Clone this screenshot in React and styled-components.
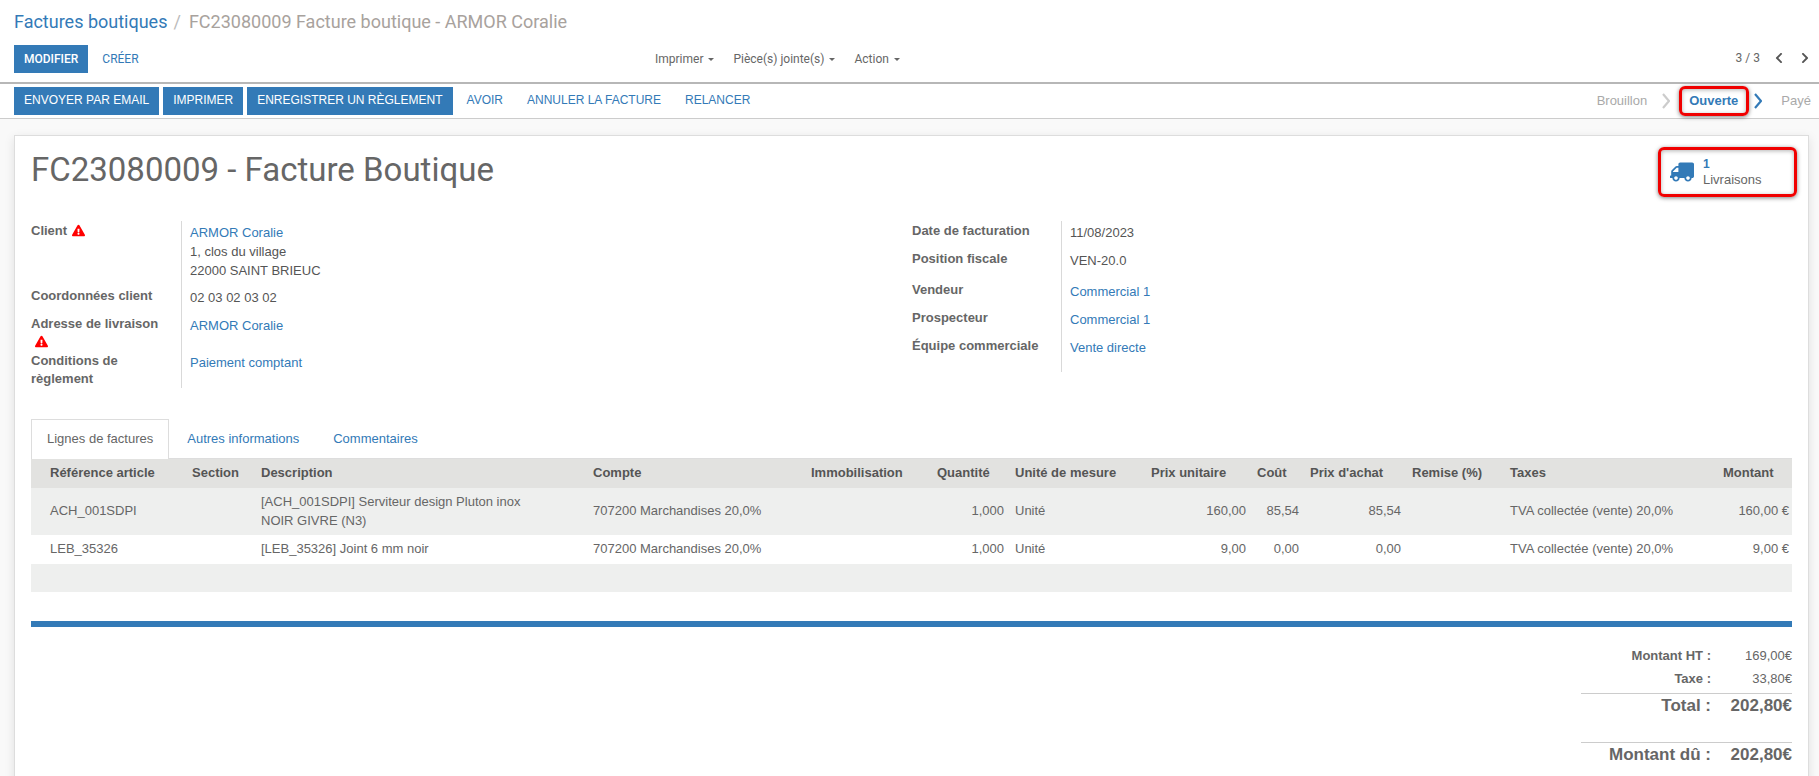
import React from 'react'
import styled, { createGlobalStyle } from 'styled-components'
import { FaTruck, FaExclamationTriangle, FaChevronLeft, FaChevronRight } from 'react-icons/fa'

const GlobalStyle = createGlobalStyle`
html, body {
    margin: 0;
    height: 776px;
    overflow: hidden;
    background: #f9f9f9;
    font-family: "Liberation Sans", Arial, sans-serif;
    font-size: 13px;
    color: #666666;
}
* { box-sizing: border-box; }
`;

const blue = '#337ab7';
const roboto = 'Roboto, "Liberation Sans", sans-serif';

const ControlPanel = styled.div`
height: 84px;
background: #ffffff;
border-bottom: 2px solid #b7b7b7;
font-family: ${roboto};
`;
const Breadcrumb = styled.div`
height: 45px;
padding: 11px 0 0 14px;
font-size: 18px;
line-height: 22px;
color: #a8a29d;
a { color: ${blue}; }
i { font-style: normal; color: #bbbbbb; margin: 0 8px 0 6px; }
`;
const ControlRow = styled.div`
display: grid;
grid-template-columns: 641px 1fr auto;
align-items: center;
height: 28px;
padding: 0 9px 0 14px;
`;
const Group = styled.div`
display: flex;
align-items: center;
gap: ${p => p.$gap || 4}px;
`;
const Button = styled.span`
display: inline-flex;
align-items: center;
height: 28px;
padding: 0 10px 1px;
font-size: 12px;
font-weight: ${p => p.$weight || 400};
white-space: nowrap;
background: ${blue};
color: #ffffff;
`;
const LinkButton = styled(Button)`
background: transparent;
color: ${blue};
font-weight: 400;
`;
const Dropdown = styled.span`
font-size: 12px;
color: #666666;
white-space: nowrap;
&::after {
    content: '';
    display: inline-block;
    margin-left: 5px;
    vertical-align: 2px;
    border-top: 3px solid #666666;
    border-left: 3px solid transparent;
    border-right: 3px solid transparent;
}
`;
const Pager = styled.div`
display: flex;
align-items: center;
font-size: 12px;
margin-top: -3px;
span { margin-right: 14px; }
svg { width: 10px; height: 12px; color: #555555; margin-right: 16px; }
svg:last-child { margin-right: 0; }
`;

const StatusBar = styled.div`
display: flex;
justify-content: space-between;
align-items: center;
height: 35px;
padding: 0 8px 1px 14px;
background: #ffffff;
border-bottom: 1px solid #cccccc;
`;
const Steps = styled.div`
display: flex;
align-items: center;
`;
const Step = styled.span`
position: relative;
display: inline-block;
font-size: 13px;
line-height: 15px;
font-weight: ${p => (p.$active ? 700 : 400)};
color: ${p => (p.$active ? blue : '#a9a9a9')};
margin-top: -1px;
`;
const StepArrow = styled.svg`
width: 8px;
height: 16px;
margin: ${p => p.$margin};
fill: none;
stroke: ${p => p.$color};
stroke-width: 2.2;
`;
const Highlight = styled.span`
position: absolute;
top: ${p => p.$top}px;
bottom: ${p => p.$bottom}px;
left: ${p => p.$left}px;
right: ${p => p.$right}px;
border: 3px solid #f00000;
border-radius: 6px;
box-shadow: 0 1px 4px rgba(0, 0, 0, 0.5), inset 0 1px 4px rgba(0, 0, 0, 0.3);
pointer-events: none;
`;

const Sheet = styled.div`
margin: 16px 10px 0 14px;
padding: 0 16px;
height: 700px;
background: #ffffff;
border: 1px solid #dddddd;
box-shadow: 0 3px 10px rgba(0, 0, 0, 0.1);
`;
const TitleRow = styled.div`
display: flex;
justify-content: space-between;
align-items: flex-start;
height: 85px;
`;
const Title = styled.h1`
margin: 14px 0 0;
font-family: ${roboto};
font-size: 33px;
line-height: 40px;
font-weight: 400;
color: #666666;
`;
const StatButton = styled.div`
position: relative;
display: flex;
align-items: center;
gap: 9px;
width: 124px;
height: 40px;
margin-top: 16px;
padding-left: 2px;
line-height: 16px;
b { display: block; color: ${blue}; font-weight: 700; font-size: 12px; }
svg { width: 24px; height: 20px; color: ${blue}; transform: scaleX(-1); }
`;

const InfoRow = styled.div`
display: flex;
`;
const InfoGroup = styled.div`
display: grid;
width: ${p => p.$width}px;
grid-template-columns: ${p => p.$label}px 1fr;
align-content: start;
`;
const Label = styled.div`
height: ${p => p.$height}px;
padding: 1px 8px 0 0;
font-weight: 700;
line-height: 18px;
color: #666666;
`;
const WarnIcon = styled(FaExclamationTriangle)`
color: #ff0000;
width: 13px;
height: 13px;
vertical-align: -2px;
margin-left: ${p => p.$left}px;
`;
const Value = styled.div`
height: ${p => p.$height}px;
padding: 2px 0 0 8px;
line-height: 19px;
color: #555555;
border-left: 1px solid #d9d9d9;
a { color: ${blue}; }
`;

const Tabs = styled.div`
display: flex;
height: 40px;
margin-top: 31px;
border-bottom: 1px solid #dddddd;
`;
const Tab = styled.div`
height: ${p => (p.$active ? 40 : 39)}px;
margin-right: 2px;
padding: 0 15px;
line-height: 38px;
color: ${p => (p.$active ? '#666666' : blue)};
background: #ffffff;
border: 1px solid ${p => (p.$active ? '#dddddd' : 'transparent')};
border-bottom: none;
`;

const LinesTable = styled.table`
width: 1761px;
table-layout: fixed;
border-collapse: collapse;
color: #666666;
`;
const HeadRow = styled.tr`
height: 29px;
background: #e2e2e0;
`;
const Th = styled.th`
padding: 0 0 2px ${p => (p.$first ? 19 : 8)}px;
text-align: left;
font-weight: 700;
color: #555555;
white-space: nowrap;
`;
const Row = styled.tr`
height: ${p => p.$height}px;
background: ${p => (p.$odd ? '#eeefee' : '#ffffff')};
`;
const Td = styled.td`
padding: 0 ${p => (p.$wrap ? 40 : 3)}px 2px ${p => (p.$first ? 19 : 8)}px;
line-height: 19px;
text-align: ${p => (p.$num ? 'right' : 'left')};
white-space: ${p => (p.$wrap ? 'normal' : 'nowrap')};
`;
const BlueBar = styled.div`
height: 6px;
margin-top: 29px;
background: ${blue};
`;

const Totals = styled.div`
display: grid;
grid-template-columns: 130px 81px;
width: 211px;
margin: 17px 0 0 auto;
`;
const TotalLabel = styled.div`
grid-column: 1;
text-align: right;
font-weight: 700;
font-size: ${p => (p.$big ? 17 : 13)}px;
line-height: ${p => (p.$big ? 24 : 23)}px;
white-space: nowrap;
border-top: ${p => (p.$big ? '1px solid #cccccc' : 'none')};
margin-top: ${p => p.$gap || 0}px;
`;
const TotalValue = styled(TotalLabel)`
grid-column: 2;
font-weight: ${p => (p.$big ? 700 : 400)};
`;

const columns = [153, 69, 332, 218, 126, 78, 136, 106, 53, 102, 98, 213, 77];
const headers = ['Référence article', 'Section', 'Description', 'Compte', 'Immobilisation', 'Quantité', 'Unité de mesure', 'Prix unitaire', 'Coût', "Prix d'achat", 'Remise (%)', 'Taxes', 'Montant'];
const lines = [
    { ref: 'ACH_001SDPI', desc: '[ACH_001SDPI] Serviteur design Pluton inox NOIR GIVRE (N3)', price: '160,00', cost: '85,54', total: '160,00 €', height: 47 },
    { ref: 'LEB_35326', desc: '[LEB_35326] Joint 6 mm noir', price: '9,00', cost: '0,00', total: '9,00 €', height: 29 },
];

export default function App() {
    return (
        <>
            <GlobalStyle />
            <ControlPanel>
                <Breadcrumb><a>Factures boutiques</a><i>/</i>FC23080009 Facture boutique - ARMOR Coralie</Breadcrumb>
                <ControlRow>
                    <Group>
                        <Button $weight={500}>MODIFIER</Button>
                        <LinkButton>CRÉER</LinkButton>
                    </Group>
                    <Group $gap={19}>
                        <Dropdown>Imprimer</Dropdown>
                        <Dropdown>Pièce(s) jointe(s)</Dropdown>
                        <Dropdown>Action</Dropdown>
                    </Group>
                    <Pager>
                        <span>3 / 3</span>
                        <FaChevronLeft />
                        <FaChevronRight />
                    </Pager>
                </ControlRow>
            </ControlPanel>
            <StatusBar>
                <Group>
                    <Button>ENVOYER PAR EMAIL</Button>
                    <Button>IMPRIMER</Button>
                    <Button>ENREGISTRER UN RÈGLEMENT</Button>
                    <LinkButton>AVOIR</LinkButton>
                    <LinkButton>ANNULER LA FACTURE</LinkButton>
                    <LinkButton>RELANCER</LinkButton>
                </Group>
                <Steps>
                    <Step>Brouillon</Step>
                    <StepArrow $margin="0 19px 0 15px" $color="#cccccc" viewBox="0 0 8 16"><path d="M1 1l6 7-6 7" /></StepArrow>
                    <Step $active>Ouverte<Highlight $top={-7} $bottom={-8} $left={-10} $right={-11} /></Step>
                    <StepArrow $margin="0 19px 0 16px" $color="#337ab7" viewBox="0 0 8 16"><path d="M1 1l6 7-6 7" /></StepArrow>
                    <Step>Payé</Step>
                </Steps>
            </StatusBar>
            <Sheet>
                <TitleRow>
                    <Title>FC23080009 - Facture Boutique</Title>
                    <StatButton>
                        <FaTruck />
                        <div><b>1</b>Livraisons</div>
                        <Highlight $top={-5} $bottom={-5} $left={-10} $right={-5} />
                    </StatButton>
                </TitleRow>
                <InfoRow>
                    <InfoGroup $width={881} $label={150}>
                        <Label $height={65}>Client <WarnIcon $left={1} /></Label>
                        <Value $height={65}><a>ARMOR Coralie</a><br />1, clos du village<br />22000 SAINT BRIEUC</Value>
                        <Label $height={28}>Coordonnées client</Label>
                        <Value $height={28}>02 03 02 03 02</Value>
                        <Label $height={37}>Adresse de livraison <WarnIcon $left={4} /></Label>
                        <Value $height={37}><a>ARMOR Coralie</a></Value>
                        <Label $height={37}>Conditions de règlement</Label>
                        <Value $height={37}><a>Paiement comptant</a></Value>
                    </InfoGroup>
                    <InfoGroup $width={600} $label={149}>
                        <Label $height={28}>Date de facturation</Label>
                        <Value $height={28}>11/08/2023</Value>
                        <Label $height={31}>Position fiscale</Label>
                        <Value $height={31}>VEN-20.0</Value>
                        <Label $height={28}>Vendeur</Label>
                        <Value $height={28}><a>Commercial 1</a></Value>
                        <Label $height={28}>Prospecteur</Label>
                        <Value $height={28}><a>Commercial 1</a></Value>
                        <Label $height={36}>Équipe commerciale</Label>
                        <Value $height={36}><a>Vente directe</a></Value>
                    </InfoGroup>
                </InfoRow>
                <Tabs>
                    <Tab $active>Lignes de factures</Tab>
                    <Tab>Autres informations</Tab>
                    <Tab>Commentaires</Tab>
                </Tabs>
                <LinesTable>
                    <colgroup>
                        {columns.map((w, i) => <col key={i} width={w} />)}
                    </colgroup>
                    <thead>
                        <HeadRow>
                            {headers.map((h, i) => <Th key={h} $first={i === 0}>{h}</Th>)}
                        </HeadRow>
                    </thead>
                    <tbody>
                        {lines.map((line, i) => (
                            <Row key={line.ref} $height={line.height} $odd={i === 0}>
                                <Td $first>{line.ref}</Td>
                                <Td />
                                <Td $wrap>{line.desc}</Td>
                                <Td>707200 Marchandises 20,0%</Td>
                                <Td />
                                <Td $num>1,000</Td>
                                <Td>Unité</Td>
                                <Td $num>{line.price}</Td>
                                <Td $num>{line.cost}</Td>
                                <Td $num>{line.cost}</Td>
                                <Td />
                                <Td>TVA collectée (vente) 20,0%</Td>
                                <Td $num>{line.total}</Td>
                            </Row>
                        ))}
                        <Row $height={28} $odd><Td colSpan={13} /></Row>
                    </tbody>
                </LinesTable>
                <BlueBar />
                <Totals>
                    <TotalLabel>Montant HT :</TotalLabel>
                    <TotalValue>169,00€</TotalValue>
                    <TotalLabel>Taxe :</TotalLabel>
                    <TotalValue>33,80€</TotalValue>
                    <TotalLabel $big $gap={3}>Total :</TotalLabel>
                    <TotalValue $big $gap={3}>202,80€</TotalValue>
                    <TotalLabel $big $gap={24}>Montant dû :</TotalLabel>
                    <TotalValue $big $gap={24}>202,80€</TotalValue>
                </Totals>
            </Sheet>
        </>
    )
}
